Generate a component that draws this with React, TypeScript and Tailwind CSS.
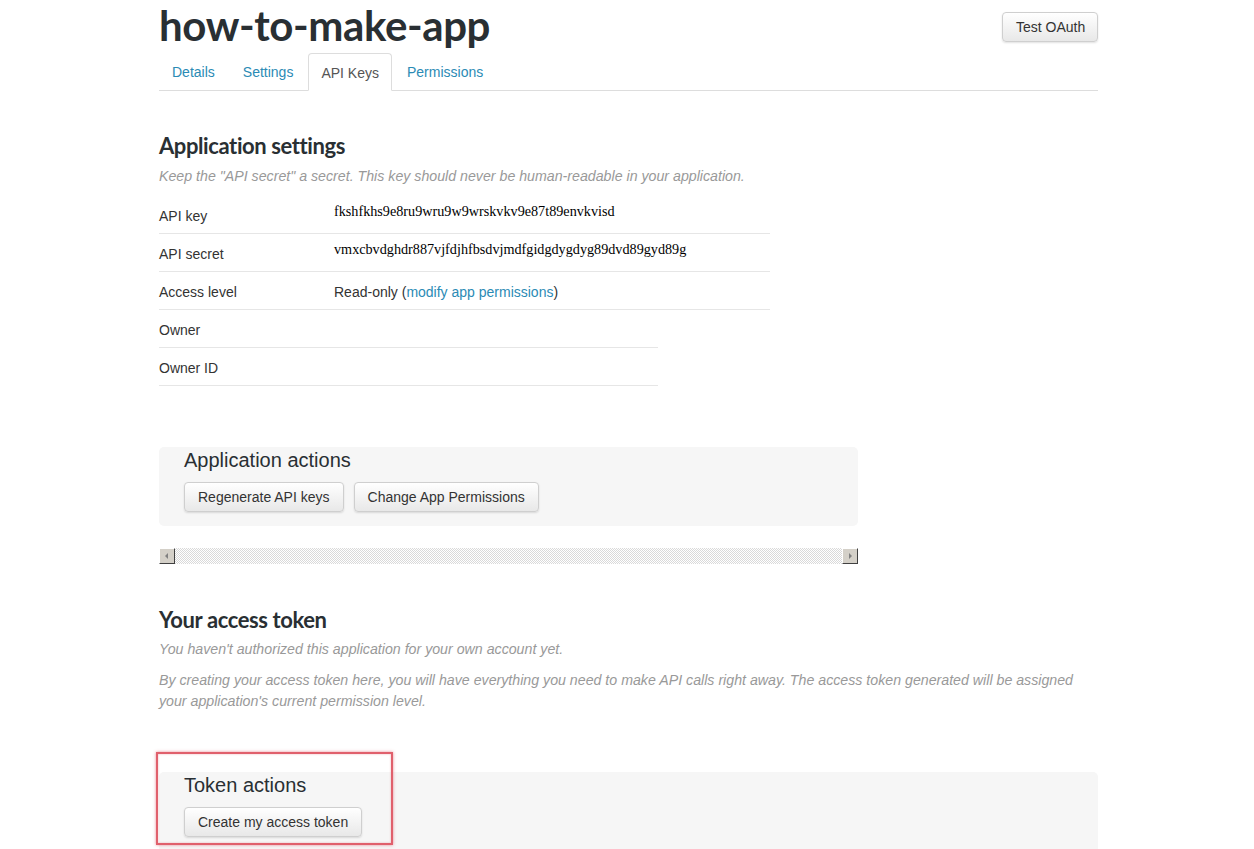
import React from "react";

const sans = "font-['Liberation_Sans',Arial,sans-serif]";
const head = "font-['Lato','Open_Sans',sans-serif]";

function Btn({ children, className = "" }: { children: React.ReactNode; className?: string }) {
  return (
    <button
      className={`h-[30px] px-[13px] whitespace-nowrap rounded-[4px] border border-[#cfcfcf] bg-gradient-to-b from-white to-[#e8e8e8] text-[14px] text-[#333] shadow-[0_1px_2px_rgba(0,0,0,0.12)] ${sans} ${className}`}
    >
      {children}
    </button>
  );
}

function Row({ label, children, w, serif }: { label: string; children?: React.ReactNode; w: string; serif?: boolean }) {
  return (
    <div className={`flex h-[38px] border-b border-[#e6e6e6] ${w}`}>
      <div className="w-[175px] pt-[10px] text-[14px] text-[#333] leading-[20px]">{label}</div>
      <div
        className={
          serif
            ? "pt-[5px] text-[14.2px] leading-[20px] text-black whitespace-nowrap font-['Liberation_Serif','Times_New_Roman',serif]"
            : "pt-[10px] text-[14px] leading-[20px] text-[#333]"
        }
      >
        {children}
      </div>
    </div>
  );
}

export default function App() {
  return (
    <div className={`relative min-h-[849px] bg-white ${sans}`}>
      <div className="ml-[159px] w-[939px]">
        {/* header */}
        <div className="flex justify-between items-start">
          <h1 className={`${head} text-[42px] font-bold leading-[50px] text-[#292f33] tracking-[-0.4px]`}>how-to-make-app</h1>
          <Btn className="mt-[12px] w-[96px] px-0">Test OAuth</Btn>
        </div>
        {/* tabs */}
        <div className="mt-[3px] flex border-b border-[#ddd] h-[38px] text-[14px]">
          <div className="px-[13px] mr-[2px] pt-[9px] text-[#2b8bb5]">Details</div>
          <div className="px-[13px] mr-[2px] pt-[9px] text-[#2b8bb5]">Settings</div>
          <div className="px-[12px] mr-[2px] pt-[9px] text-[#555] border border-[#ddd] border-b-white rounded-t-[4px] bg-white h-[38px]">API Keys</div>
          <div className="px-[13px] pt-[9px] text-[#2b8bb5]">Permissions</div>
        </div>

        {/* Application settings */}
        <h2 className={`${head} mt-[42px] text-[22px] font-bold leading-[26px] text-[#292f33] tracking-[-0.4px]`}>Application settings</h2>
        <p className="mt-[8px] text-[14.2px] italic text-[#999] leading-[18px]">
          Keep the "API secret" a secret. This key should never be human-readable in your application.
        </p>
        <div className="mt-[11px]">
          <Row label="API key" w="w-[611px]" serif>fkshfkhs9e8ru9wru9w9wrskvkv9e87t89envkvisd</Row>
          <Row label="API secret" w="w-[611px]" serif>vmxcbvdghdr887vjfdjhfbsdvjmdfgidgdygdyg89dvd89gyd89g</Row>
          <Row label="Access level" w="w-[611px]">
            Read-only (<span className="text-[#2b8bb5]">modify app permissions</span>)
          </Row>
          <Row label="Owner" w="w-[499px]" />
          <Row label="Owner ID" w="w-[499px]" />
        </div>

        {/* Application actions */}
        <div className="mt-[61px] w-[699px] h-[79px] rounded-[5px] bg-[#f6f6f6] pl-[25px] pt-[1px]">
          <div className="text-[20px] leading-[24px] text-[#292f33]">Application actions</div>
          <div className="mt-[10px] flex gap-[10px]">
            <Btn>Regenerate API keys</Btn>
            <Btn>Change App Permissions</Btn>
          </div>
        </div>

        {/* scrollbar */}
        <div className="mt-[22px] w-[699px] h-[16px] flex bg-[repeating-conic-gradient(#d9d9d9_0%_25%,#ffffff_0%_50%)] bg-[length:2px_2px]">
          <div className="w-[16px] h-[16px] bg-[#d4d0c8] border border-t-white border-l-white border-r-[#404040] border-b-[#404040] flex items-center justify-center">
            <svg width="8" height="8" viewBox="0 0 8 8"><path d="M5 1 L2 4 L5 7 Z" fill="#808080" /></svg>
          </div>
          <div className="flex-1" />
          <div className="w-[16px] h-[16px] bg-[#d4d0c8] border border-t-white border-l-white border-r-[#404040] border-b-[#404040] flex items-center justify-center">
            <svg width="8" height="8" viewBox="0 0 8 8"><path d="M3 1 L6 4 L3 7 Z" fill="#808080" /></svg>
          </div>
        </div>

        {/* Your access token */}
        <h2 className={`${head} mt-[43px] text-[22px] font-bold leading-[26px] text-[#292f33] tracking-[-0.4px]`}>Your access token</h2>
        <p className="mt-[6px] text-[14.2px] italic text-[#999] leading-[21px]">
          You haven't authorized this application for your own account yet.
        </p>
        <p className="mt-[10px] text-[14.2px] italic text-[#999] leading-[21px] w-[939px]">
          By creating your access token here, you will have everything you need to make API calls right away. The access token generated will be assigned your application's current permission level.
        </p>

        {/* Token actions */}
        <div className="mt-[60px] w-[939px] h-[90px] rounded-t-[5px] bg-[#f6f6f6] pl-[25px] pt-[1px]">
          <div className="text-[20px] leading-[24px] text-[#292f33]">Token actions</div>
          <div className="mt-[10px] flex">
            <Btn>Create my access token</Btn>
          </div>
        </div>
      </div>

      {/* red highlight */}
      <div className="absolute left-[156px] top-[752px] w-[237px] h-[93px] border-2 border-[#e0606c] shadow-[0_0_3px_rgba(224,96,108,0.7),inset_0_0_2px_rgba(224,96,108,0.5)] pointer-events-none" />
    </div>
  );
}
